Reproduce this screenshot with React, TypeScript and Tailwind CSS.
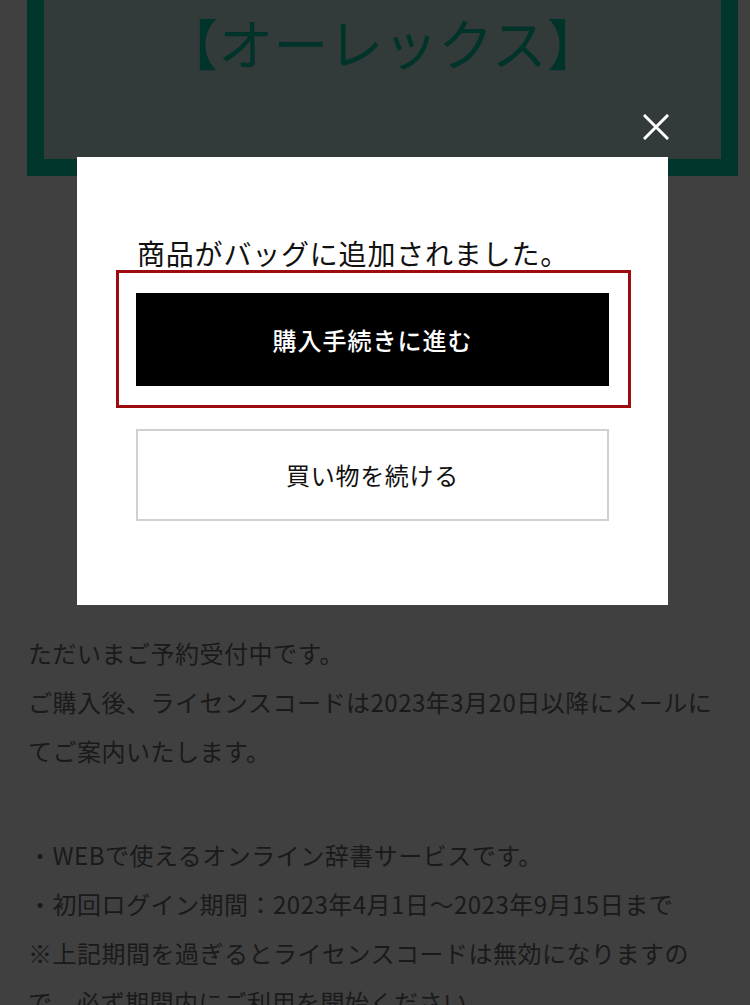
import React from 'react';

const jp = { fontFamily: '"Noto Sans CJK JP", "Noto Sans", sans-serif' };

/**
 * Close glyph shown above the modal's top-right corner
 */
const CloseIcon: React.FC = () => (
  <svg width="26" height="26" viewBox="0 0 26 26" fill="none">
    <path d="M2 2 L24 24 M24 2 L2 24" stroke="#fff" strokeWidth="3" strokeLinecap="square" />
  </svg>
);

/**
 * "Added to bag" dialog
 */
const AddedToBagModal: React.FC = () => (
  <div className="absolute left-[77px] top-[157px] w-[591px] h-[448px] bg-white px-[59px] pt-[76px]">
    <button className="absolute right-[-1px] top-[-43px] w-[26px] h-[26px]" aria-label="閉じる">
      <CloseIcon />
    </button>

    <p className="text-[28px] leading-[40px] tracking-[0.8px] text-[#111] pl-px" style={jp}>
      商品がバッグに追加されました。
    </p>

    <div className="relative mt-[20px]">
      {/* highlight frame around the primary action */}
      <span className="absolute left-[-20px] right-[-22px] top-[-23px] bottom-[-22px] border-[3px] border-[#9e0b0f] pointer-events-none" />
      <button className="w-full h-[93px] bg-black text-white text-[24px] tracking-[1px] font-medium flex items-center justify-center" style={jp}>
        購入手続きに進む
      </button>
    </div>

    <button className="mt-[43px] w-full h-[92px] bg-white border-2 border-[#d0d0d0] text-[#111] text-[24px] tracking-[0.7px] flex items-center justify-center" style={jp}>
      買い物を続ける
    </button>
  </div>
);

export default function App() {
  return (
    <div className="relative w-[750px] h-[1005px] overflow-hidden bg-[#404040]" style={jp}>
      {/* product header box */}
      <div className="ml-[27px] w-[711px] h-[216px] -mt-[40px] border-[17px] border-[#00362b] bg-[#333a3a] pt-[29px] text-center">
        <h1 className="text-[55px] leading-[70px] text-[#00342a]">【オーレックス】</h1>
      </div>

      {/* description */}
      <div className="mt-[452px] pl-[28px] text-[24px] leading-[49px] tracking-[0.5px] text-[#1a1a1a]">
        <p>
          ただいまご予約受付中です。
          <br />
          ご購入後、ライセンスコードは2023年3月20日以降にメールに
          <br />
          てご案内いたします。
        </p>
        <p className="mt-[55px]">
          ・WEBで使えるオンライン辞書サービスです。
          <br />
          ・初回ログイン期間：2023年4月1日～2023年9月15日まで
          <br />
          ※上記期間を過ぎるとライセンスコードは無効になりますの
          <br />
          で、必ず期間内にご利用を開始ください。
        </p>
      </div>

      <AddedToBagModal />
    </div>
  );
}
